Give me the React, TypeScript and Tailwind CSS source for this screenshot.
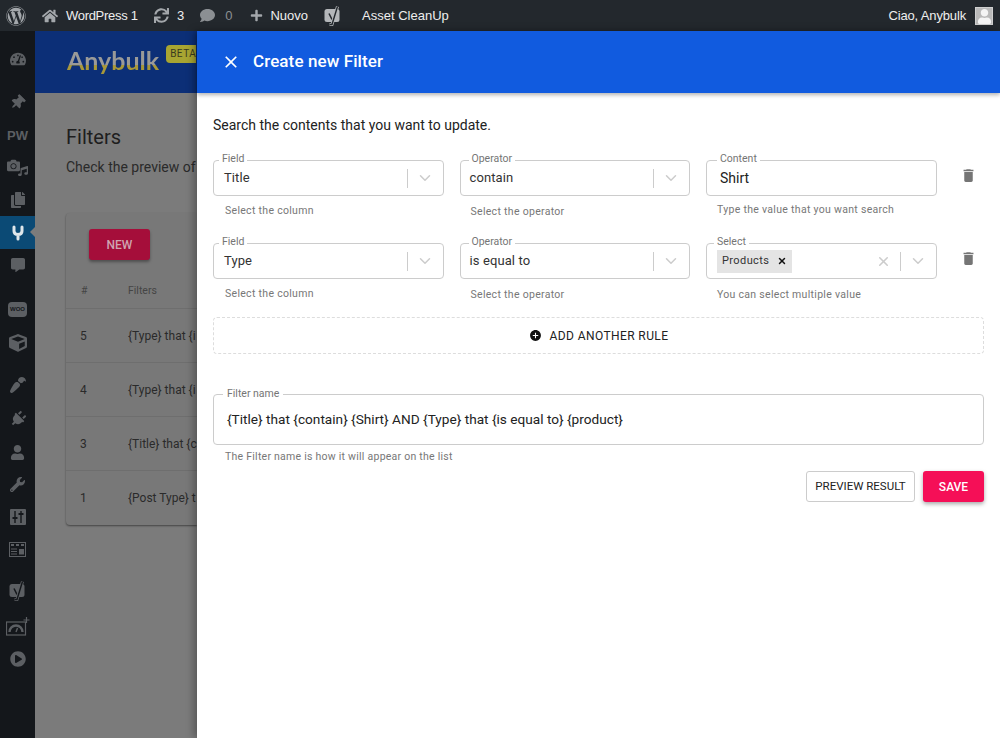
import { ReactNode } from "react";
import {
  FaWordpress, FaHome, FaSync, FaComment, FaPlus, FaTachometerAlt, FaThumbtack,
  FaCamera, FaMusic, FaCopy, FaCube, FaPaintBrush, FaPlug, FaUser, FaWrench, FaPlayCircle, FaCommentAlt,
} from "react-icons/fa";
import { MdClose, MdDelete, MdAddCircle } from "react-icons/md";
import { ChevronDown, X } from "lucide-react";

const ICON = "#5c5f63";

function AnybulkMark() {
  return (
    <svg width="12" height="16" viewBox="0 0 12 16">
      <path d="M2 2v4c0 2.500 1.500 3.500 4 3.500s4-1 4-3.500V2M6 9.500V14" fill="none" stroke="#dfe6ea" strokeWidth="3" strokeLinecap="round" />
    </svg>
  );
}

function YoastMark({ fill, ink }: { fill: string; ink: string }) {
  return (
    <svg width="17" height="20" viewBox="0 0 17 20">
      <rect x="0.500" y="3" width="15" height="13" rx="2.500" fill={fill} />
      <path d="M5 7.500l3 6" fill="none" stroke={ink} strokeWidth="1.500" />
      <path d="M13.500 0.500L8 18.500H5.500" fill="none" stroke={fill} strokeWidth="3" />
      <path d="M13.500 0.500L8 18.500H5.500" fill="none" stroke={ink} strokeWidth="1.400" />
    </svg>
  );
}

function SlidersBox() {
  return (
    <svg width="16" height="16" viewBox="0 0 16 16">
      <rect width="16" height="16" rx="1" fill={ICON} />
      <path d="M5 2v12M11 2v12" stroke="#14171b" strokeWidth="1.400" />
      <path d="M2.500 9h5M8.500 5h5" stroke="#14171b" strokeWidth="2" />
    </svg>
  );
}

function TableBox() {
  return (
    <svg width="17" height="15" viewBox="0 0 17 15">
      <rect x="0.500" y="0.500" width="16" height="14" fill="none" stroke={ICON} />
      <path d="M2 3h3M7 3h3M12 3h3" stroke={ICON} strokeWidth="2" />
      <path d="M2 7h6M2 9.500h6M2 12h6" stroke={ICON} />
      <rect x="10" y="7" width="5" height="5.500" fill={ICON} />
    </svg>
  );
}

function GaugePlus() {
  return (
    <svg width="24" height="20" viewBox="0 0 24 20">
      <rect x="0.500" y="5" width="19" height="13" fill="none" stroke={ICON} strokeWidth="1.200" />
      <path d="M3.500 15a6.500 6.500 0 0 1 13 0" fill="none" stroke={ICON} strokeWidth="2.400" />
      <path d="M10 15l1.500-4" stroke={ICON} strokeWidth="1.400" />
      <path d="M20.500 0v6M17.500 3h6" stroke={ICON} strokeWidth="1.200" />
    </svg>
  );
}

type MenuItem = { key: string; cls: string; icon: ReactNode; active?: boolean };

const menu: MenuItem[] = [
  { key: "dash", cls: "mt-3", icon: <FaTachometerAlt size={16} color={ICON} /> },
  { key: "pin", cls: "mt-[11px]", icon: <FaThumbtack size={15} color={ICON} className="rotate-45" /> },
  { key: "pw", cls: "mt-[2px]", icon: <span className="text-[13px] font-black text-[#5c5f63] font-['Liberation_Sans',sans-serif]">PW</span> },
  {
    key: "media", cls: "",
    icon: (
      <span className="flex">
        <FaCamera size={13} color={ICON} className="-mt-[2px]" />
        <FaMusic size={10} color={ICON} className="-ml-[2px] mt-[5px]" />
      </span>
    ),
  },
  { key: "pages", cls: "", icon: <FaCopy size={16} color={ICON} /> },
  { key: "anybulk", cls: "h-[33px] bg-[#0b4a75]", icon: <AnybulkMark />, active: true },
  { key: "comments", cls: "", icon: <FaCommentAlt size={14} color={ICON} /> },
  {
    key: "woo", cls: "mt-3",
    icon: <span className="w-[19px] h-[15px] rounded-sm bg-[#5c5f63] text-[6px] leading-[15px] text-center text-[#14171b] font-bold font-['Liberation_Sans',sans-serif]">WOO</span>,
  },
  { key: "box", cls: "mt-[2px]", icon: <FaCube size={18} color={ICON} /> },
  { key: "brush", cls: "mt-[10px]", icon: <FaPaintBrush size={16} color={ICON} className="rotate-180" /> },
  { key: "plug", cls: "mt-[2px]", icon: <FaPlug size={16} color={ICON} className="rotate-45" /> },
  { key: "user", cls: "mt-[1px]", icon: <FaUser size={15} color={ICON} /> },
  { key: "wrench", cls: "", icon: <FaWrench size={15} color={ICON} /> },
  { key: "sliders", cls: "mt-[1px]", icon: <SlidersBox /> },
  { key: "table", cls: "", icon: <TableBox /> },
  { key: "yoast", cls: "mt-[10px]", icon: <YoastMark fill={ICON} ink="#14171b" /> },
  { key: "gauge", cls: "mt-[4px]", icon: <GaugePlus /> },
  { key: "play", cls: "", icon: <FaPlayCircle size={16} color={ICON} /> },
];

function TopBar() {
  return (
    <div className="h-[31px] shrink-0 bg-[#23282d] flex items-center pl-[6px] pr-[7px] text-[13px] text-[#eeeeee] font-['Liberation_Sans',sans-serif]">
      <FaWordpress size={20} color="#a3a7ab" />
      <FaHome size={16} color="#a3a7ab" className="ml-[16px]" />
      <span className="ml-[8px] w-[72px] tracking-[-0.3px] whitespace-nowrap">WordPress 1</span>
      <FaSync size={15} color="#a3a7ab" className="ml-[16px]" />
      <span className="ml-[8px]">3</span>
      <FaComment size={15} color="#8b8f93" className="ml-[16px]" />
      <span className="ml-[10px] text-[#8b8f93]">0</span>
      <FaPlus size={13} color="#a3a7ab" className="ml-[18px]" />
      <span className="ml-[7px]">Nuovo</span>
      <span className="ml-[16px]"><YoastMark fill="#b4b7ba" ink="#23282d" /></span>
      <span className="ml-[21px]">Asset CleanUp</span>
      <span className="ml-auto tracking-[-0.15px]">Ciao, Anybulk</span>
      <span className="ml-[9px] w-[18px] h-[18px] bg-[#b9b9b9] border border-[#cfcfcf] flex items-end justify-center overflow-hidden">
        <FaUser size={15} color="#f4f4f4" />
      </span>
    </div>
  );
}

function SideMenu() {
  return (
    <div className="w-[35px] shrink-0 bg-[#14171b] flex flex-col">
      {menu.map((item) => (
        <div key={item.key} className={`relative h-8 flex items-center justify-center ${item.cls}`}>
          {item.icon}
          {item.active && (
            <span className="absolute right-0 top-[11px] w-0 h-0 border-y-[5px] border-y-transparent border-r-[5px] border-r-[#7c7c7c]" />
          )}
        </div>
      ))}
    </div>
  );
}

const behindRows = [
  { id: "5", text: "{Type} that {i" },
  { id: "4", text: "{Type} that {i" },
  { id: "3", text: "{Title} that {c" },
  { id: "1", text: "{Post Type} t" },
];

function BehindPage() {
  return (
    <div className="w-[162px] shrink-0 bg-[#7b7b7b] flex flex-col overflow-hidden">
      <div className="h-[62px] shrink-0 bg-[#0c2f77] flex items-center pl-[32px]">
        <span className="-mt-[4px] text-[25px] font-bold leading-[34px] text-transparent bg-clip-text bg-linear-to-b from-[#9a9a98] from-65% to-[#a8983a] to-65% font-['Lato',sans-serif]">Anybulk</span>
        <span className="ml-[7px] -mt-[17px] h-[18px] pl-[4px] w-[30px] shrink-0 rounded-l-sm bg-[#a8a532] text-[10px] leading-[18px] tracking-[0.5px] text-[#3a3a20]">BETA</span>
      </div>
      <div className="pl-[31px] text-[#1e1e1e] whitespace-nowrap">
        <div className="mt-[31px] text-[20px] leading-[26px]">Filters</div>
        <div className="mt-[7px] text-[14px] leading-[20px] text-[#2a2a2a]">Check the preview of</div>
        <div className="mt-[36px] h-[312px] bg-[#787878] rounded-l shadow-[0_1px_2px_rgba(0,0,0,0.45)] flex flex-col">
          <div className="h-[71px] shrink-0 pt-[16px] pl-[23px]">
            <div className="w-[61px] h-[31px] rounded-[3px] bg-[#a50e3a] text-[#cfa4b0] text-[12px] font-medium flex items-center justify-center shadow-[0_2px_3px_rgba(0,0,0,0.35)]">NEW</div>
          </div>
          <div className="h-[25px] shrink-0 flex items-start text-[10.500px] leading-[14px] text-[#454545] border-b border-[#6e6e6e]">
            <span className="w-[62px] pl-[15px]">#</span>
            <span>Filters</span>
          </div>
          {behindRows.map((r, i) => (
            <div key={r.id} className={`h-[54px] shrink-0 flex items-center text-[12px] text-[#2a2a2a] ${i < 3 ? "border-b border-[#6e6e6e]" : ""}`}>
              <span className="w-[62px] pl-[14px]">{r.id}</span>
              <span>{r.text}</span>
            </div>
          ))}
        </div>
      </div>
    </div>
  );
}

function Outlined({ label, helper, helperCls, children, notchCls }: { label: string; helper: string; helperCls: string; children: ReactNode; notchCls: string }) {
  return (
    <div className="min-w-0">
      <div className="relative h-[36px] rounded border border-[#cccccc] bg-white flex items-center">
        <span className={`absolute -top-[8px] bg-white px-[3px] text-[10.500px] leading-[12px] text-[#757575] ${notchCls}`}>{label}</span>
        {children}
      </div>
      <div className={`text-[10.500px] leading-[14px] tracking-[0.3px] text-[#777777] ${helperCls}`}>{helper}</div>
    </div>
  );
}

function SelectArrow() {
  return (
    <>
      <span className="w-px h-[19px] bg-[#cccccc] ml-[9px]" />
      <ChevronDown size={18} color="#cccccc" strokeWidth={2} className="ml-[8px] mr-[9px]" />
    </>
  );
}

function SelectField({ label, value, helper }: { label: string; value: string; helper: string }) {
  const isField = label === "Field";
  return (
    <Outlined
      label={label}
      helper={helper}
      helperCls={isField ? "mt-[8px] pl-[12px]" : "mt-[9px] pl-[11px]"}
      notchCls={isField ? "left-[5px]" : "left-[8px]"}
    >
      <span className={`flex-1 text-[13px] tracking-[0.1px] text-[#333333] ${isField ? "pl-[10px]" : "pl-[9px]"}`}>{value}</span>
      <SelectArrow />
    </Outlined>
  );
}

function TrashCell() {
  return (
    <div className="h-[36px] flex items-center justify-center -mt-[3px]">
      <MdDelete size={17} color="#757575" />
    </div>
  );
}

function Drawer() {
  return (
    <div className="flex-1 bg-white flex flex-col shadow-[-3px_0_8px_rgba(0,0,0,0.3)] z-10">
      <div className="h-[62px] shrink-0 bg-[#115bdf] flex items-center pl-[24px] pb-[1px] shadow-[0_2px_4px_rgba(0,0,0,0.3)]">
        <MdClose size={20} color="#ffffff" />
        <span className="ml-[12px] text-[17px] tracking-[0.1px] font-medium text-white">Create new Filter</span>
      </div>
      <div className="px-[16px] pt-[22px]">
        <p className="text-[14px] leading-[20px] text-[#222222]">Search the contents that you want to update.</p>
        <div className="mt-[25px] grid grid-cols-[230.5px_230.5px_230.5px_1fr] gap-x-[16px] gap-y-[24px]">
          <SelectField label="Field" value="Title" helper="Select the column" />
          <SelectField label="Operator" value="contain" helper="Select the operator" />
          <Outlined label="Content" helper="Type the value that you want search" helperCls="mt-[7px] pl-[11px]" notchCls="left-[10px]">
            <span className="pl-[13px] text-[14px] text-[#222222]">Shirt</span>
          </Outlined>
          <TrashCell />

          <SelectField label="Field" value="Type" helper="Select the column" />
          <SelectField label="Operator" value="is equal to" helper="Select the operator" />
          <Outlined label="Select" helper="You can select multiple value" helperCls="mt-[9px] pl-[11px]" notchCls="left-[7px]">
            <span className="ml-[10px] h-[23px] w-[75px] bg-[#e4e4e4] flex items-center pl-[5px] text-[11px] tracking-[0.4px] text-[#333333]">
              Products
              <X size={10} color="#111111" strokeWidth={3.500} className="ml-[8px]" />
            </span>
            <X size={15} color="#cccccc" strokeWidth={2.500} className="ml-auto" />
            <SelectArrow />
          </Outlined>
          <TrashCell />
        </div>
        <div className="mt-[15px] h-[37px] border border-dashed border-[#dddddd] rounded-sm flex items-center justify-center text-[12px] tracking-[0.4px] text-[#222222]">
          <MdAddCircle size={13} color="#111111" className="mr-[8px]" />
          ADD ANOTHER RULE
        </div>
        <div className="relative mt-[40px] h-[51px] border border-[#cccccc] rounded flex items-center pl-[13px] text-[13.650px] text-[#222222]">
          <span className="absolute -top-[7px] left-[9px] bg-white px-[4px] text-[10.500px] leading-[12px] text-[#757575]">Filter name</span>
          {"{Title} that {contain} {Shirt} AND {Type} that {is equal to} {product}"}
        </div>
        <div className="mt-[5px] pl-[12px] text-[10.500px] leading-[14px] tracking-[0.25px] text-[#777777]">The Filter name is how it will appear on the list</div>
        <div className="mt-[7px] flex justify-end gap-[8px]">
          <div className="w-[109px] h-[31px] rounded-[3px] border border-[#cccccc] flex items-center justify-center text-[11.500px] text-[#222222]">PREVIEW RESULT</div>
          <div className="w-[61px] h-[31px] rounded-[3px] bg-[#f50f57] flex items-center justify-center text-[12px] font-medium text-white shadow-[0_2px_4px_rgba(0,0,0,0.35)]">SAVE</div>
        </div>
      </div>
    </div>
  );
}

export default function App() {
  return (
    <div className="w-[1000px] h-[738px] flex flex-col overflow-hidden bg-white font-['Roboto',sans-serif]">
      <TopBar />
      <div className="flex-1 flex min-h-0">
        <SideMenu />
        <BehindPage />
        <Drawer />
      </div>
    </div>
  );
}
